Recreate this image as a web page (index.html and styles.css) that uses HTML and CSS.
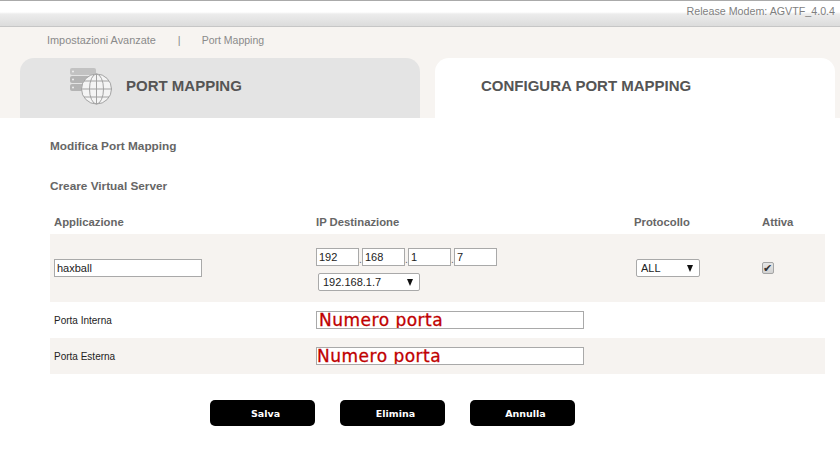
FILE: index.html
```html
<!DOCTYPE html>
<html lang="it">
<head>
    <meta charset="UTF-8">
    <title>Port Mapping</title>
    <link rel="stylesheet" href="styles.css">
</head>
<body>
    <div class="top-bar">
        <span>Release Modem: AGVTF_4.0.4</span>
    </div>

    <div class="head-area">
        <div class="breadcrumb">
            <span>Impostazioni Avanzate</span>
            <span class="sep">|</span>
            <span class="crumb-last">Port Mapping</span>
        </div>
        <div class="tabs">
            <div class="tab tab-off">
                <svg class="tab-icon" width="44" height="38" viewBox="0 0 44 38">
                    <rect x="0" y="0" width="26" height="7" rx="2" fill="#c2c2c2"/>
                    <rect x="0" y="8" width="26" height="7" rx="2" fill="#b4b4b4"/>
                    <rect x="0" y="16" width="26" height="7" rx="2" fill="#b4b4b4"/>
                    <circle cx="3" cy="3.500" r="1" fill="#eee"/>
                    <circle cx="3" cy="11.500" r="1" fill="#eee"/>
                    <circle cx="3" cy="19.500" r="1" fill="#eee"/>
                    <g fill="#f4f4f4" stroke="#a2a2a2" stroke-width="1">
                        <circle cx="26.500" cy="21" r="15"/>
                        <ellipse cx="26.500" cy="21" rx="7" ry="15"/>
                    </g>
                    <path d="M26.500 6V36M11.500 21H41.500M14 13H39M14 29H39" fill="none" stroke="#a2a2a2"/>
                </svg>
                <span>PORT MAPPING</span>
            </div>
            <div class="tab tab-on">
                <span>CONFIGURA PORT MAPPING</span>
            </div>
        </div>
    </div>

    <div class="main">
        <h3>Modifica Port Mapping</h3>
        <h3 class="last">Creare Virtual Server</h3>

        <table class="form-table">
            <tr class="labels">
                <th class="col-app">Applicazione</th>
                <th class="col-ip">IP Destinazione</th>
                <th class="col-proto">Protocollo</th>
                <th class="col-on">Attiva</th>
            </tr>
            <tr class="shaded row-main">
                <td><input class="app-name" type="text" value="haxball"></td>
                <td class="ip-cell">
                    <div class="ip-line">
                        <input type="text" value="192"><i>.</i><input type="text" value="168"><i>.</i><input type="text" value="1"><i>.</i><input type="text" value="7">
                    </div>
                    <span class="select-wrap ip-select">
                        <select><option>192.168.1.7</option></select>
                    </span>
                </td>
                <td>
                    <span class="select-wrap proto-select">
                        <select><option>ALL</option></select>
                    </span>
                </td>
                <td><input class="check" type="checkbox" checked></td>
            </tr>
            <tr class="row-port">
                <td>Porta Interna</td>
                <td colspan="3"><input class="port first" type="text" value="Numero porta"></td>
            </tr>
            <tr class="shaded row-port">
                <td>Porta Esterna</td>
                <td colspan="3"><input class="port" type="text" value="Numero porta"></td>
            </tr>
        </table>

        <div class="buttons">
            <button>Salva</button>
            <button>Elimina</button>
            <button>Annulla</button>
        </div>
    </div>
</body>
</html>
```

FILE: styles.css
```css
* {
    margin: 0;
    padding: 0;
    box-sizing: border-box;
}

body {
    font-family: "Liberation Sans", Arial, sans-serif;
    background: #fff;
    color: #222;
    overflow: hidden;
}

.top-bar {
    height: 27px;
    border-top: 1px solid #aaa;
    border-bottom: 1px solid #c6c6c6;
    background: linear-gradient(#fff 0, #fff 11px, #ececec 13px, #dcdcdc 25px);
    padding: 4px 5px 0 0;
    text-align: right;
    font-size: 10.700px;
    line-height: 13px;
    color: #7f7f7f;
}

.head-area {
    height: 91px;
    background: #f7f4f1;
}

.breadcrumb {
    height: 31px;
    padding: 7px 0 0 47px;
    display: flex;
    font-size: 10.900px;
    line-height: 13px;
    color: #8a8a8a;
}

.breadcrumb .sep {
    margin: 0 21px 0 22px;
}

.crumb-last {
    font-size: 10.500px;
}

.tabs {
    display: flex;
    padding-left: 20px;
    gap: 15px;
}

.tab {
    width: 400px;
    height: 60px;
    border-radius: 14px 14px 0 0;
    display: flex;
    align-items: center;
    font-size: 15px;
    font-weight: 700;
    color: #555;
}

.tab-off {
    background: #e4e4e4;
    padding-left: 50px;
}

.tab-on {
    background: #fff;
    padding-left: 46px;
}

.tab span {
    margin-top: -6px;
}

.tab-icon {
    margin: -2px 12px 0 0;
}

.main {
    padding: 21px 15px 0 50px;
}

h3 {
    font-size: 11.800px;
    line-height: 14px;
    color: #666;
    margin-bottom: 26px;
}

h3.last {
    margin-bottom: 13px;
}

.form-table {
    width: 775px;
    table-layout: fixed;
    border-collapse: collapse;
    margin-top: -1px;
    font-size: 10px;
}

.labels th {
    height: 29px;
    padding-top: 4px;
    text-align: left;
    font-size: 11.300px;
    color: #666;
}

.col-app { width: 266px; padding-left: 4px; }
.col-ip { width: 318px; }
.col-proto { width: 128px; }
.col-on { width: 63px; }

.shaded {
    background: #f6f3f0;
}

.row-main {
    height: 68px;
}

.row-main td:first-child,
.row-port td:first-child {
    padding-left: 4px;
}

.row-port {
    height: 36px;
}

input[type="text"],
select {
    font-family: "Liberation Sans", Arial, sans-serif;
    font-size: 11px;
    color: #222;
    background: #fff;
    border: 1px solid #a9a9a9;
    outline: none;
}

.app-name {
    display: block;
    width: 148px;
    height: 18px;
    padding-left: 2px;
}

.ip-cell {
    padding-top: 3px;
}

.ip-line {
    display: flex;
    height: 18px;
    margin-bottom: 7px;
}

.ip-line input {
    width: 43px;
    height: 18px;
    padding-left: 2px;
}

.ip-line i {
    width: 3px;
    font-style: normal;
    font-size: 10px;
    line-height: 24px;
    color: #666;
    text-align: center;
}

.select-wrap {
    position: relative;
    display: block;
    height: 18px;
}

.select-wrap select {
    appearance: none;
    display: block;
    width: 100%;
    height: 18px;
    border-radius: 2px;
    padding-left: 4px;
}

.select-wrap::after {
    content: "";
    position: absolute;
    top: 6px;
    right: 7px;
    border-left: 3.500px solid transparent;
    border-right: 3.500px solid transparent;
    border-top: 7px solid #111;
    pointer-events: none;
}

.ip-select {
    width: 102px;
    margin-left: 2px;
}

.proto-select {
    width: 64px;
    margin-left: 2px;
}

.check {
    appearance: none;
    display: block;
    width: 12px;
    height: 12px;
    border: 1px solid #a5a5a5;
    border-radius: 2px;
    background: linear-gradient(#e6e6e6, #d2d2d2);
    position: relative;
    margin-top: -1px;
}

.check::after {
    content: "\2714";
    position: absolute;
    left: 0;
    top: -1px;
    font-size: 11px;
    line-height: 12px;
    color: #333;
}

input.port {
    display: block;
    width: 268px;
    height: 18px;
    font-family: "DejaVu Sans", Verdana, sans-serif;
    font-size: 17px;
    letter-spacing: 0.5px;
    color: #c00000;
    -webkit-text-fill-color: #c00000;
    -webkit-text-stroke: 0.3px #c00000;
    padding: 0 0 1px 0;
}

input.port.first {
    padding-left: 2px;
}

.buttons {
    display: flex;
    gap: 25px;
    margin: 26px 0 0 160px;
}

.buttons button {
    width: 105px;
    height: 26px;
    border: none;
    border-radius: 5px;
    background: #000;
    color: #fff;
    font-family: "DejaVu Sans", Verdana, sans-serif;
    font-size: 9.500px;
    font-weight: 700;
    padding-left: 6px;
}
```
